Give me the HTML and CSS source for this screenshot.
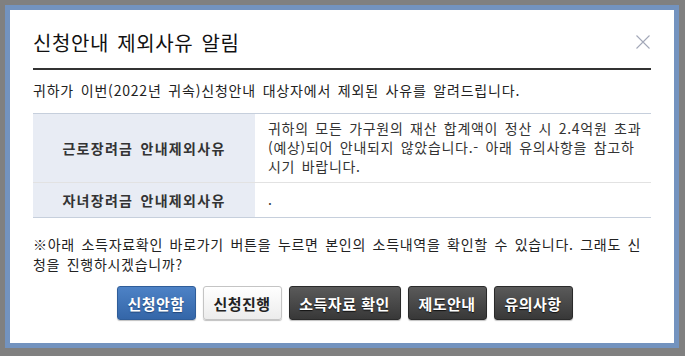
FILE: index.html
```html
<!DOCTYPE html>
<html lang="ko">
<head>
<meta charset="utf-8">
<title>신청안내 제외사유 알림</title>
<link rel="stylesheet" href="styles.css">
</head>
<body>
<div class="dialog">
  <div class="dialog-head">
    <h1 class="dialog-title">신청안내 제외사유 알림</h1>
    <button class="dialog-close" type="button" aria-label="닫기">
      <svg width="14" height="14" viewBox="0 0 14 14"><path d="M0.5 0.5L13.5 13.5M13.5 0.5L0.5 13.5" stroke="#a3a8b8" stroke-width="1.1" fill="none"/></svg>
    </button>
  </div>
  <p class="intro">귀하가 이번(2022년 귀속)신청안내 대상자에서 제외된 사유를 알려드립니다.</p>
  <table class="reason-table">
    <tr>
      <th>근로장려금 안내제외사유</th>
      <td>귀하의 모든 가구원의 재산 합계액이 정산 시 2.4억원 초과<br>(예상)되어 안내되지 않았습니다.- 아래 유의사항을 참고하<br>시기 바랍니다.</td>
    </tr>
    <tr>
      <th>자녀장려금 안내제외사유</th>
      <td>.</td>
    </tr>
  </table>
  <p class="notice">※아래 소득자료확인 바로가기 버튼을 누르면 본인의 소득내역을 확인할 수 있습니다. 그래도 신청을 진행하시겠습니까?</p>
  <div class="actions">
    <button class="btn btn-blue" type="button">신청안함</button>
    <button class="btn btn-white" type="button">신청진행</button>
    <button class="btn btn-dark btn-wide" type="button">소득자료 확인</button>
    <button class="btn btn-dark" type="button">제도안내</button>
    <button class="btn btn-dark" type="button">유의사항</button>
  </div>
</div>
</body>
</html>
```
FILE: styles.css
```css
html, body {
  margin: 0;
  padding: 0;
}
body {
  background: #808080;
  padding: 5px 6px 8px 5px;
  font-family: "Noto Sans CJK KR", "Noto Sans", sans-serif;
  color: #222;
  font-size: 14px;
  word-spacing: 2px;
  letter-spacing: 0.7px;
}
.dialog {
  width: 618px;
  background: #fff;
  border: 5px solid #7393bf;
  padding: 0 23px 23px 23px;
}
.dialog-head {
  position: relative;
  padding: 20px 0 12px 0;
  border-bottom: 2px solid #333;
}
.dialog-title {
  margin: 0;
  font-size: 20px;
  line-height: 26px;
  font-weight: normal;
  letter-spacing: 0.6px;
  color: #111;
}
.dialog-close {
  position: absolute;
  right: 1px;
  top: 25px;
  width: 14px;
  height: 14px;
  padding: 0;
  border: 0;
  background: none;
  display: block;
}
.dialog-close svg {
  display: block;
}
.intro {
  margin: 11px 0 0 0;
  line-height: 19px;
  letter-spacing: 0.8px;
}
.reason-table {
  margin-top: 13px;
  width: 100%;
  border-collapse: collapse;
  border-top: 1px solid #c6cfdc;
  border-bottom: 1px solid #c6cfdc;
}
.reason-table th {
  width: 222px;
  background: #e8ecf4;
  font-weight: bold;
  color: #333;
  text-align: center;
  vertical-align: middle;
  padding: 0;
  line-height: 19px;
  letter-spacing: 1.3px;
}
.reason-table td {
  padding: 5px 0 6px 13px;
  line-height: 19px;
  color: #333;
  vertical-align: top;
  white-space: nowrap;
}
.reason-table tr + tr th,
.reason-table tr + tr td {
  border-top: 1px solid #e2e2e2;
}
.reason-table tr + tr td {
  padding: 7px 0 8px 13px;
}
.notice {
  margin: 16px 0 0 0;
  line-height: 20px;
}
.actions {
  margin-top: 12px;
  padding-left: 5px;
  display: flex;
  justify-content: center;
  gap: 7px;
}
.btn {
  box-sizing: border-box;
  flex: none;
  width: 79px;
  height: 34px;
  padding: 0;
  font-family: inherit;
  font-size: 15px;
  font-weight: bold;
  letter-spacing: 0.5px;
  word-spacing: 0;
  border-radius: 3px;
  border: 1px solid;
  cursor: pointer;
  box-shadow: 0 1px 1px rgba(0, 0, 0, 0.25);
}
.btn-wide {
  width: 112px;
}
.btn-blue {
  color: #fff;
  background: linear-gradient(#4d82c6, #3466a8);
  border-color: #2f5d99;
  text-shadow: 0 1px 1px #23477a;
}
.btn-white {
  color: #222;
  background: linear-gradient(#ffffff, #ececec);
  border-color: #c4c4c4;
}
.btn-dark {
  color: #fff;
  background: linear-gradient(#5a5a5a, #383838);
  border-color: #2a2a2a;
  text-shadow: 0 1px 1px #111;
}
```
